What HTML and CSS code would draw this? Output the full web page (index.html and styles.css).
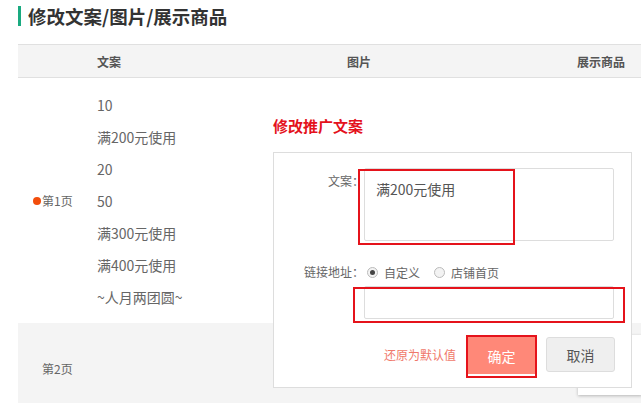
FILE: index.html
```html
<!DOCTYPE html>
<html lang="zh-CN">
<head>
    <meta charset="UTF-8">
    <title>修改文案/图片/展示商品</title>
    <link rel="stylesheet" href="styles.css">
</head>
<body>
    <div class="page">
        <h1 class="page-title">修改文案/图片/展示商品</h1>

        <div class="table">
            <div class="table-head">
                <div class="col-page"></div>
                <div class="col-copy">文案</div>
                <div class="col-pic">图片</div>
                <div class="col-goods">展示商品</div>
            </div>

            <div class="table-row">
                <div class="col-page"><span class="dot"></span>第1页</div>
                <ul class="copy-list">
                    <li>10</li>
                    <li>满200元使用</li>
                    <li>20</li>
                    <li>50</li>
                    <li>满300元使用</li>
                    <li>满400元使用</li>
                    <li>~人月两团圆~</li>
                </ul>
            </div>

            <div class="table-row gray">
                <div class="col-page plain">第2页</div>
                <div class="thumb"></div>
            </div>
        </div>

        <!-- 修改推广文案弹层 -->
        <div class="popup">
            <h2 class="popup-title">修改推广文案</h2>
            <div class="popup-box">
                <div class="form-row">
                    <label class="form-label">文案：</label>
                    <div class="textarea">满200元使用</div>
                </div>
                <div class="form-row radios">
                    <label class="form-label">链接地址：</label>
                    <div class="radio-group">
                        <span class="radio checked"></span><span class="radio-text">自定义</span>
                        <span class="radio"></span><span class="radio-text">店铺首页</span>
                    </div>
                </div>
                <div class="form-row">
                    <span class="form-label"></span>
                    <div class="input"></div>
                </div>
                <div class="actions">
                    <a class="reset">还原为默认值</a>
                    <button class="btn btn-ok">确定</button>
                    <button class="btn btn-cancel">取消</button>
                </div>

                <div class="mark mark-text"></div>
                <div class="mark mark-link"></div>
            </div>
        </div>
    </div>
</body>
</html>
```

FILE: styles.css
```css
:root {
    --border-color: #dddddd;
    --gray-bg: #f4f4f4;
    --text-color: #666666;
    --mark-color: #e5131b;
}

* {
    margin: 0;
    padding: 0;
    box-sizing: border-box;
}

body {
    font-family: "Noto Sans CJK SC", "Noto Sans", sans-serif;
    color: var(--text-color);
    background: #ffffff;
    overflow: hidden;
}

.page {
    position: relative;
    padding: 6px 0 0 18px;
    width: 641px;
    height: 403px;
}

.page-title {
    font-size: 18.5px;
    font-weight: 700;
    color: #333333;
    line-height: 20px;
    border-left: 3px solid #1aaa80;
    padding-left: 7px;
}

.table {
    margin-top: 18px;
    width: 640px;
}

.table-head {
    display: flex;
    height: 34px;
    align-items: center;
    background: var(--gray-bg);
    border-top: 1px solid #e0e0e0;
    border-bottom: 1px solid #e0e0e0;
    font-size: 12px;
    font-weight: 700;
    color: #555555;
}

.table-head .col-page {
    width: 79px;
}

.table-head .col-copy {
    width: 250px;
}

.table-head .col-pic {
    width: 230px;
}

.table-row {
    display: flex;
    align-items: center;
}

.table-row .col-page {
    width: 79px;
    padding-left: 15px;
    font-size: 12px;
    display: flex;
    align-items: center;
}

.table-row .col-page.plain {
    padding-left: 24px;
}

.dot {
    display: inline-block;
    width: 8px;
    height: 8px;
    border-radius: 50%;
    background: #f24d0c;
    margin-right: 1px;
}

.copy-list {
    list-style: none;
    padding: 11px 0 10px;
    font-size: 14px;
    line-height: 32px;
}

.table-row.gray {
    background: var(--gray-bg);
    height: 90px;
    position: relative;
}

.thumb {
    position: absolute;
    left: 560px;
    top: 12px;
    width: 64px;
    height: 60px;
    background: #ffffff;
    box-shadow: 0 1px 3px rgba(0, 0, 0, 0.25);
}

/* 弹层 */
.popup {
    position: absolute;
    left: 273px;
    top: 116px;
    width: 359px;
}

.popup-title {
    font-size: 15px;
    font-weight: 700;
    color: #e4121c;
    line-height: 20px;
    margin-bottom: 16px;
}

.popup-box {
    position: relative;
    background: #ffffff;
    border: 1px solid var(--border-color);
    padding: 15px 0 15px 0;
    height: 236px;
}

.form-row {
    display: flex;
    align-items: flex-start;
}

.form-label {
    width: 90px;
    text-align: right;
    font-size: 12px;
    line-height: 30px;
    flex-shrink: 0;
    margin-top: -2px;
}

.textarea {
    width: 250px;
    height: 73px;
    border: 1px solid var(--border-color);
    border-radius: 2px;
    padding: 9px 11px;
    font-size: 14px;
    line-height: 22px;
    color: #555555;
}

.radios {
    margin-top: 21px;
    align-items: center;
    height: 20px;
}

.radios .form-label {
    margin-top: 0;
    line-height: 20px;
}

.radio-group {
    display: flex;
    align-items: center;
    font-size: 12px;
    padding-left: 3px;
}

.radio {
    width: 11px;
    height: 11px;
    border: 1px solid #bbbbbb;
    border-radius: 50%;
    background: #f3f3f3;
    position: relative;
}

.radio.checked::after {
    content: "";
    position: absolute;
    left: 2px;
    top: 2px;
    width: 5px;
    height: 5px;
    border-radius: 50%;
    background: #444444;
}

.radio-text {
    margin: 0 14px 0 6px;
}

.input {
    margin-top: 4px;
    width: 250px;
    height: 33px;
    border: 1px solid var(--border-color);
    border-radius: 2px;
}

.actions {
    display: flex;
    justify-content: flex-end;
    align-items: flex-start;
    padding-right: 16px;
    margin-top: 18px;
}

.reset {
    font-size: 12px;
    color: #f0786a;
    line-height: 35px;
    margin-right: 12px;
}

.btn {
    font-family: inherit;
    font-size: 14px;
    height: 35px;
    border-radius: 3px;
    cursor: pointer;
}

.btn-ok {
    width: 67px;
    background: #ff8878;
    color: #ffffff;
    border: none;
    border-radius: 0;
    border-bottom: 2px solid #ffffff;
    outline: 2px solid var(--mark-color);
    outline-offset: 0;
    margin-right: 11px;
    height: 39px;
}

.btn-cancel {
    width: 69px;
    background: #efefef;
    border: 1px solid var(--border-color);
    color: #555555;
}

/* 截图标注框 */
.mark {
    position: absolute;
    border: 2px solid var(--mark-color);
}

.mark-text {
    left: 84px;
    top: 16px;
    width: 157px;
    height: 76px;
}

.mark-link {
    left: 79px;
    top: 134px;
    width: 272px;
    height: 36px;
}
```
